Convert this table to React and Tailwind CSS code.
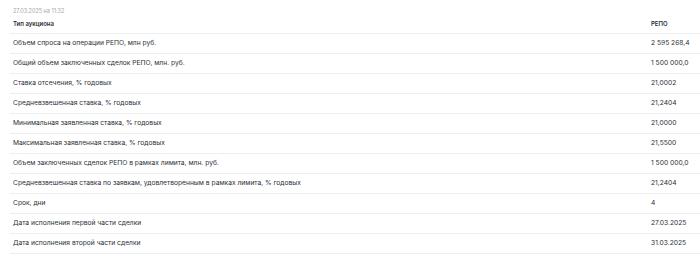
const rows = [
  ["Объем спроса на операции РЕПО, млн руб.", "2 595 268,4"],
  ["Общий объем заключенных сделок РЕПО, млн. руб.", "1 500 000,0"],
  ["Ставка отсечения, % годовых", "21,0002"],
  ["Средневзвешенная ставка, % годовых", "21,2404"],
  ["Минимальная заявленная ставка, % годовых", "21,0000"],
  ["Максимальная заявленная ставка, % годовых", "21,5500"],
  ["Объем заключенных сделок РЕПО в рамках лимита, млн. руб.", "1 500 000,0"],
  ["Средневзвешенная ставка по заявкам, удовлетворенным в рамках лимита, % годовых", "21,2404"],
  ["Срок, дни", "4"],
  ["Дата исполнения первой части сделки", "27.03.2025"],
  ["Дата исполнения второй части сделки", "31.03.2025"],
];

export default function App() {
  return (
    <div
      className="w-[700px] h-[258px] bg-white pl-[10px] overflow-hidden text-[#2b2f36]"
      style={{ fontFamily: "Inter, 'Noto Sans', sans-serif" }}
    >
      <div className="pt-[7px] pl-[3px] text-[5.5px] leading-[8px] text-[#a3a8ae]">
        27.03.2025 на 11:32
      </div>
      <table className="w-full border-collapse">
        <thead>
          <tr className="h-[18px] border-b border-[#eceef0]">
            <th className="pl-[3px] text-left text-[6px] font-semibold">Тип аукциона</th>
            <th className="w-[52px] pl-[3px] text-left text-[6px] font-semibold">РЕПО</th>
          </tr>
        </thead>
        <tbody>
          {rows.map(([label, value]) => (
            <tr key={label} className="h-[20px] border-b border-[#eceef0]">
              <td className="pl-[3px] text-[6.7px]">{label}</td>
              <td className="pl-[3px] text-[6.7px]">{value}</td>
            </tr>
          ))}
        </tbody>
      </table>
    </div>
  );
}
